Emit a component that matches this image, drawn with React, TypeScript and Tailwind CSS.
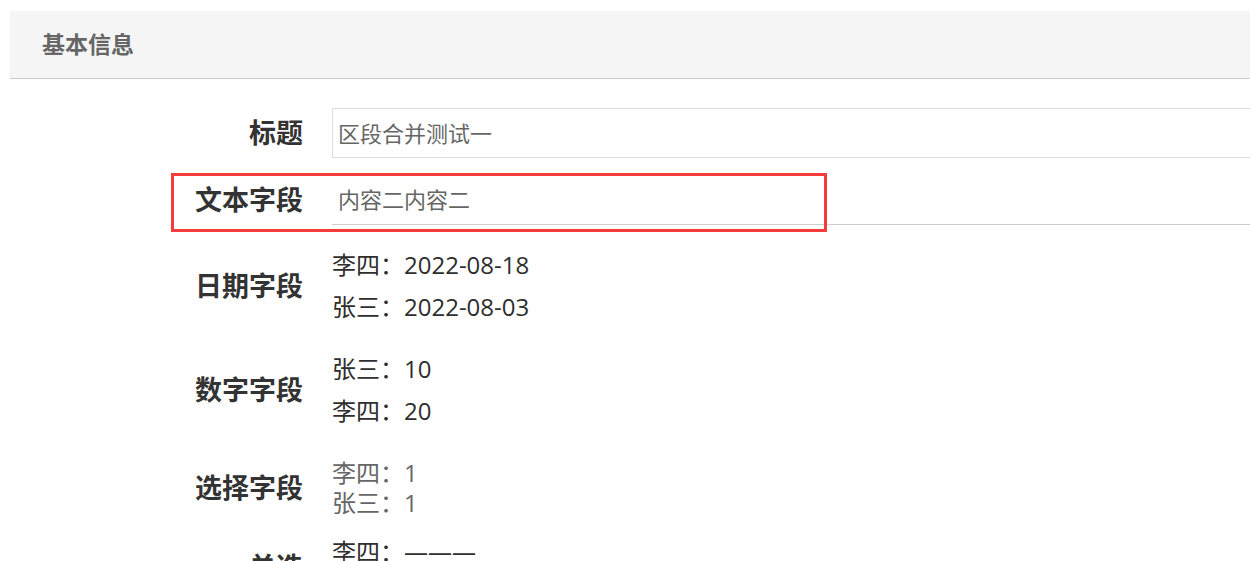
export default function App() {
    const dates = ["李四：2022-08-18", "张三：2022-08-03"];
    const numbers = ["张三：10", "李四：20"];
    const selects = ["李四：1", "张三：1"];
    const radios = ["李四：———", "张三：———"];

    return (
        <div
            className="h-[561px] w-full overflow-hidden bg-white pl-[10px] pt-[11px]"
            style={{ fontFamily: '"Open Sans", "Noto Sans CJK SC", sans-serif' }}
        >
            <div className="w-[1300px]">
                <div className="flex h-[68px] items-center border-b border-[#cccccc] bg-[#f5f5f5] pl-[32px]">
                    <span className="text-[23px] font-bold text-[#666666]">基本信息</span>
                </div>

                <div className="relative flex flex-col">
                    {/* 标题 */}
                    <div className="mt-[29px] flex items-center">
                        <div className="w-[293px] text-right text-[27px] font-bold text-[#333333]">标题</div>
                        <div className="ml-[29px] flex h-[50px] flex-1 items-center border border-[#dcdcdc] pl-[5px] text-[22px] text-[#666666]">
                            区段合并测试一
                        </div>
                    </div>

                    {/* 文本字段 */}
                    <div className="relative mt-[17px] flex items-center">
                        <div className="w-[293px] text-right text-[27px] font-bold text-[#333333]">文本字段</div>
                        <div className="ml-[29px] flex h-[50px] flex-1 items-center border-b border-[#cccccc] pl-[6px] text-[22px] text-[#666666]">
                            内容二内容二
                        </div>
                        <div className="pointer-events-none absolute left-[161px] top-[-2px] h-[59px] w-[656px] border-[3px] border-[#f43c3c]" />
                    </div>

                    {/* 日期字段 */}
                    <div className="mt-[19px] flex items-center">
                        <div className="w-[293px] text-right text-[27px] font-bold text-[#333333]">日期字段</div>
                        <div className="ml-[29px] flex flex-col text-[24px] leading-[42px] text-[#2e2e2e]">
                            {dates.map((d) => (
                                <div key={d}>{d}</div>
                            ))}
                        </div>
                    </div>

                    {/* 数字字段 */}
                    <div className="mt-[20px] flex items-center">
                        <div className="w-[293px] text-right text-[27px] font-bold text-[#333333]">数字字段</div>
                        <div className="ml-[29px] flex flex-col text-[24px] leading-[42px] text-[#2e2e2e]">
                            {numbers.map((d) => (
                                <div key={d}>{d}</div>
                            ))}
                        </div>
                    </div>

                    {/* 选择字段 */}
                    <div className="mt-[26px] flex items-center">
                        <div className="w-[293px] text-right text-[27px] font-bold text-[#333333]">选择字段</div>
                        <div className="ml-[29px] flex flex-col text-[24px] leading-[30px] text-[#666666]">
                            {selects.map((d) => (
                                <div key={d}>{d}</div>
                            ))}
                        </div>
                    </div>

                    {/* 单选 */}
                    <div className="mt-[19px] flex items-center">
                        <div className="w-[293px] text-right text-[27px] font-bold text-[#333333]">单选</div>
                        <div className="ml-[29px] flex flex-col text-[24px] leading-[30px] text-[#2e2e2e]">
                            {radios.map((d) => (
                                <div key={d}>{d}</div>
                            ))}
                        </div>
                    </div>
                </div>
            </div>
        </div>
    );
}
